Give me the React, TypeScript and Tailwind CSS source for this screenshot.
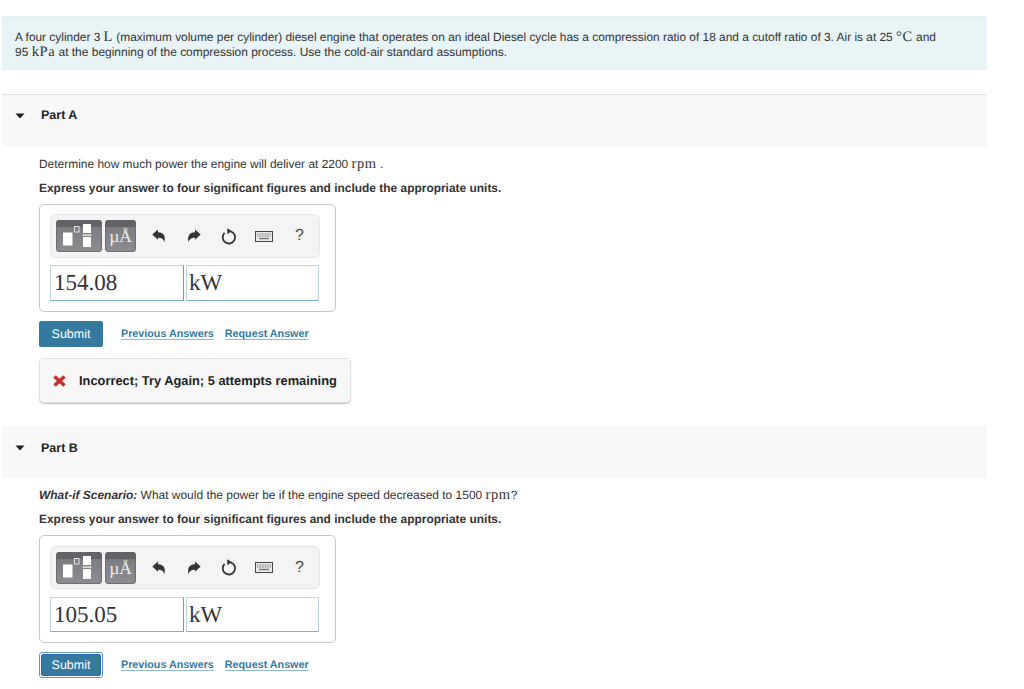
import React from "react";

const serif = "font-['Liberation_Serif',serif]";
const math = "font-['Liberation_Serif',serif] text-[14.5px] leading-[0] tracking-[0.6px]";

function Templates() {
  return (
    <div className="relative h-[32px] w-[46px] overflow-hidden rounded-[4px] bg-gradient-to-b from-[#77777b] to-[#8e8e92] shadow-[inset_0_0_0_1px_#6e6e72]">
      <div className="h-[7px] bg-[#636367]" />
      <svg width="46" height="32" viewBox="0 0 46 32" className="absolute left-0 top-0">
        <rect x="7" y="12.5" width="9.5" height="13" fill="#fff" />
        <rect x="18.5" y="6.5" width="4.5" height="5.5" fill="none" stroke="#e4e4e4" strokeWidth="1" />
        <rect x="27" y="4" width="8" height="9" fill="#fff" />
        <rect x="26.5" y="14.5" width="9" height="1.2" fill="#fff" />
        <rect x="27" y="17" width="8" height="10" fill="#fff" />
      </svg>
    </div>
  );
}

function Units() {
  return (
    <div className={`relative h-[32px] w-[31px] overflow-hidden rounded-[4px] bg-gradient-to-b from-[#77777b] to-[#8e8e92] shadow-[inset_0_0_0_1px_#6e6e72] ${serif}`}>
      <div className="h-[7px] bg-[#636367]" />
      <span className="absolute left-0 right-0 top-[6px] text-center text-[17.5px] leading-[20px] text-[#eeeeee]">µÅ</span>
    </div>
  );
}

function Undo({ flip = false }: { flip?: boolean }) {
  return (
    <svg width="14" height="14" viewBox="0 0 14 14" className={flip ? "-scale-x-100" : ""}>
      <path d="M0.3 5.4 L6 0.4 V3.2 C11 3 14 6.5 12.4 13.2 C11.8 10.4 9.8 8.6 6 8.8 V10.8 Z" fill="#333" />
    </svg>
  );
}

function Reset() {
  return (
    <svg width="16" height="17" viewBox="0 0 16 17">
      <path d="M9.6 3.3 A6.2 6.2 0 1 1 3.6 4.8" fill="none" stroke="#333" strokeWidth="1.8" />
      <path d="M6.2 0.2 L10.8 3 L6.4 6.2 Z" fill="#333" />
    </svg>
  );
}

function Keyboard() {
  return (
    <svg width="18" height="11" viewBox="0 0 18 11">
      <rect x="0.5" y="0.5" width="17" height="10" fill="#e9e9e9" stroke="#444" />
      <path d="M2 3H16M2 5H16" stroke="#777" strokeWidth="1" strokeDasharray="1 0.6" />
      <path d="M4 7.5H14" stroke="#777" strokeWidth="1.4" />
    </svg>
  );
}

function Toolbar({ second = false }: { second?: boolean }) {
  return (
    <div className={`flex w-[270px] items-center rounded-[6px] border border-[#e6e6e6] bg-[#f4f4f4] pl-[5px] ${second ? "h-[43px]" : "h-[44px]"}`}>
      <Templates />
      <div className="ml-[3px]"><Units /></div>
      <div className="ml-[16px] flex w-[14px] justify-center"><Undo /></div>
      <div className="ml-[21px] flex w-[14px] justify-center"><Undo flip /></div>
      <div className="ml-[20px] flex w-[16px] justify-center"><Reset /></div>
      <div className="ml-[18px] flex w-[18px] justify-center"><Keyboard /></div>
      <span className="ml-[22px] font-['Liberation_Sans',sans-serif] text-[16px] text-[#444]">?</span>
    </div>
  );
}

function AnswerBox({ value, second = false }: { value: string; second?: boolean }) {
  return (
    <div className={`h-[108px] w-[297px] rounded-[5px] border border-[#c8c8c8] pl-[10px] ${second ? "pt-[10px]" : "pt-[9px]"}`}>
      <Toolbar second={second} />
      <div className={`flex gap-[2px] text-[23px] text-[#333] ${serif} ${second ? "mt-[8px]" : "mt-[7px]"}`}>
        <div className={`flex w-[134px] items-center border border-[#bcd6e0] border-b-[#7fb0c6] border-r-[#6d9db3] pl-[3px] pt-[1px] ${second ? "h-[35px]" : "h-[36px]"}`}>{value}</div>
        <div className={`flex w-[133px] items-center border border-[#bcd6e0] border-b-[#7fb0c6] pl-[2px] pt-[1px] ${second ? "h-[35px]" : "h-[36px]"}`}>kW</div>
      </div>
    </div>
  );
}

function Actions({ focused = false }: { focused?: boolean }) {
  return (
    <div className="flex items-center">
      <div
        className={
          focused
            ? "flex h-[26px] w-[64px] items-center justify-center rounded-[3px] border border-[#5f95c9] bg-white p-[1px]"
            : "flex h-[26px] w-[64px] items-center justify-center rounded-[2px] bg-[#357a9e] text-[12.5px] text-white"
        }
      >
        {focused ? (
          <div className="flex h-full w-full items-center justify-center rounded-[2px] border border-[#2c6cb4] bg-[#357a9e] text-[12.5px] text-white">Submit</div>
        ) : (
          "Submit"
        )}
      </div>
      <a className="ml-[18px] text-[10.75px] font-bold text-[#2f7ba3] underline decoration-[#8fbcd2] underline-offset-2">Previous Answers</a>
      <a className="ml-[11px] text-[10.75px] font-bold text-[#2f7ba3] underline decoration-[#8fbcd2] underline-offset-2">Request Answer</a>
    </div>
  );
}

function PartHeader({ label, border = false }: { label: string; border?: boolean }) {
  return (
    <div className={`flex items-start bg-[#f8f8f8] pl-[13px] ${border ? "h-[53px] border-t border-[#e4e4e4] pt-[12px]" : "h-[52px] pt-[13px]"}`}>
      <svg width="10" height="6" viewBox="0 0 10 6" className="mt-[6px]">
        <path d="M0.5 0.5 H9.5 L5 5.5 Z" fill="#222" />
      </svg>
      <span className={`ml-[16px] text-[12.5px] leading-[16px] font-bold text-[#222] ${border ? "" : "mt-[1px]"}`}>{label}</span>
    </div>
  );
}

export default function App() {
  return (
    <div className="h-[689px] w-[1024px] overflow-hidden bg-white pl-[2px] pt-[16px] font-['Liberation_Sans',sans-serif] text-[#333] [text-rendering:geometricPrecision]">
      <div className="w-[985px]">
        <div className="h-[54px] border-t border-[#e2eef0] bg-[#e8f4f6] pl-[13px] pt-[13px] text-[11.9px] leading-[15px] text-[#333]">
          <div>
            A four cylinder 3 <span className={math}>L</span> (maximum volume per cylinder) diesel engine that operates on an ideal Diesel cycle has a compression ratio of 18 and a cutoff ratio of 3. Air is at 25 <span className={math}>°C</span> and
          </div>
          <div className="text-[11.96px]">
            95 <span className={math}>kPa</span> at the beginning of the compression process. Use the cold-air standard assumptions.
          </div>
        </div>

        <div className="mt-[24px]">
          <PartHeader label="Part A" border />
        </div>
        <div className="pl-[37px]">
          <p className="mt-[9px] text-[11.94px] leading-[16px]">
            Determine how much power the engine will deliver at 2200 <span className={math}>rpm</span> .
          </p>
          <p className="mt-[8px] text-[11.95px] leading-[16px] font-bold">Express your answer to four significant figures and include the appropriate units.</p>
          <div className="mt-[8px]"><AnswerBox value="154.08" /></div>
          <div className="mt-[9px]"><Actions /></div>
          <div className="mt-[11px] flex h-[45px] w-[312px] items-center rounded-[5px] border border-[#e2e2e2] bg-[#f8f8f8] pl-[13px] pt-[1px] shadow-[0_1px_1px_#c4c4c4]">
            <svg width="13" height="12" viewBox="0 0 13 12">
              <path d="M1.5 1.5 L11.5 10.5 M11.5 1.5 L1.5 10.5" stroke="#c9302c" strokeWidth="3.6" />
            </svg>
            <span className="ml-[13px] text-[12.85px] font-bold text-[#222]">Incorrect; Try Again; 5 attempts remaining</span>
          </div>
        </div>

        <div className="mt-[23px]">
          <PartHeader label="Part B" />
        </div>
        <div className="pl-[37px]">
          <p className="mt-[9px] text-[11.96px] leading-[16px]">
            <b className="italic">What-if Scenario:</b> What would the power be if the engine speed decreased to 1500 <span className={math}>rpm</span>?
          </p>
          <p className="mt-[8px] text-[11.95px] leading-[16px] font-bold">Express your answer to four significant figures and include the appropriate units.</p>
          <div className="mt-[8px]"><AnswerBox value="105.05" second /></div>
          <div className="mt-[9px]"><Actions focused /></div>
        </div>
      </div>
    </div>
  );
}
